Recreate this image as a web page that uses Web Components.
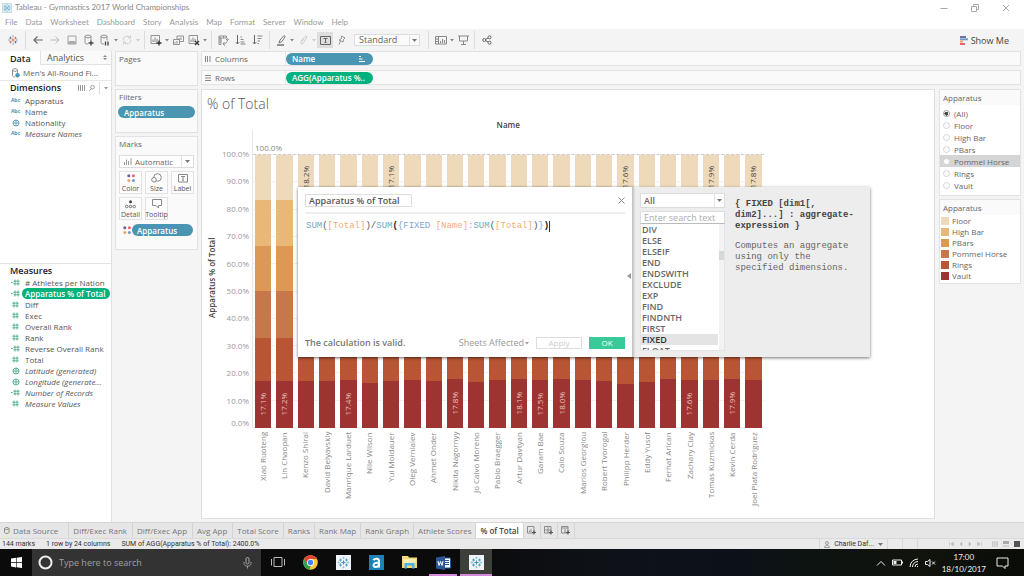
<!DOCTYPE html>
<html lang="en">
<head>
<meta charset="utf-8">
<title>Tableau - Gymnastics 2017 World Championships</title>
<style>
html,body{margin:0;height:100%;background:#f4f4f4}
body{font:8px/11px "Open Sans","Noto Sans",sans-serif;color:#666}
</style>
</head>
<body>
<app-window></app-window>
<script>
const BASE = `*{box-sizing:border-box}
button,input,select{font:inherit;color:inherit;margin:0;padding:0;border:0;background:none;border-radius:0;outline:0;text-align:inherit}
select{appearance:none}
ul{list-style:none;margin:0;padding:0}
svg{display:block;flex:none}
:host{display:block}`;
const define = (name, css, html) => customElements.define(name, class extends HTMLElement {
  constructor() {
    super();
    const root = this.attachShadow({ mode: 'open' });
    const t = document.createElement('template');
    t.innerHTML = `<style>${BASE}${css}</style>${typeof html === 'function' ? html(this) : html}`;
    root.append(t.content.cloneNode(true));
  }
});
const svg = (w, h, body, extra = '') => `<svg width="${w}" height="${h}" viewBox="0 0 ${w} ${h}" fill="none" stroke="currentColor" aria-hidden="true" ${extra}>${body}</svg>`;
const CARET = svg(5, 3, '<path d="M0 0h5L2.5 3z" fill="#777" stroke="none"/>');
const SPARK = (s, c) => `<svg width="${s}" height="${s}" viewBox="0 0 12 12" fill="none" aria-hidden="true">${c}</svg>`;
const CROSSES = col => `<g stroke="${col[0]}" stroke-width="1.1"><path d="M6 4v4M4 6h4"/></g><g stroke="${col[1]}"><path d="M3 2v3M1.5 3.5h3M9 7v3M7.5 8.5h3"/></g><g stroke="${col[2]}"><path d="M9 2v3M7.500 3.500h3M3 7v3M1.500 8.500h3"/></g><g stroke="${col[3]}" stroke-width=".8"><path d="M6 .2v2.200M4.900 1.300h2.200M6 9.600v2.200M4.900 10.700h2.200M1.300 4.900v2.200M.2 6h2.200M10.700 4.900v2.200M9.600 6h2.200"/></g>`;
const BLUE = ['#3f94b8', '#5aa5c6', '#5aa5c6', '#7fbcd6'];
const DOTS = svg(10, 10, '<g stroke="none"><circle cx="2.800" cy="2.800" r="1.500" fill="#6f5b8c"/><circle cx="7.400" cy="2.800" r="1.500" fill="#f0616e"/><circle cx="2.800" cy="7.400" r="1.500" fill="#f2a272"/><circle cx="7.400" cy="7.400" r="1.500" fill="#6f9cc6"/></g>');

define('title-bar', `
:host{display:flex;align-items:center;height:15px;background:#fff;color:#888;padding:0 14px 0 2px;gap:3px;font:8px/11px Lato,sans-serif}
.i{background:#e3eff5;border:1px solid #c8dbe5}
nav{margin-left:auto;display:flex;gap:23px;color:#aaa}`,
`<span class="i">${SPARK(8, CROSSES(BLUE))}</span><span>Tableau - Gymnastics 2017 World Championships</span>
<nav><button aria-label="Minimise">${svg(8, 8, '<path d="M.5 4.500h7"/>')}</button><button aria-label="Restore">${svg(8, 8, '<path d="M.5 2.500h5v5h-5zM2.500 2V.5h5v5H6"/>')}</button><button aria-label="Close">${svg(8, 8, '<path d="M1 1l6 6M7 1L1 7"/>')}</button></nav>`);

define('menu-bar', `
:host{display:flex;align-items:center;height:14px;background:#fff;color:#999;padding-left:5px;gap:8px;font:8px/11px Lato,sans-serif}`,
'File,Data,Worksheet,Dashboard,Story,Analysis,Map,Format,Server,Window,Help'.split(',').map(m => `<button>${m}</button>`).join(''));

const ic = {
  back: svg(10, 10, '<path d="M.8 5h9M4.500 1.500L1 5l3.500 3.500" stroke="#666" stroke-width="1.200"/>'),
  fwd: svg(10, 10, '<path d="M.5 5h8.500M5.500 1.500L9 5 5.500 8.500" stroke="#bbb"/>'),
  save: svg(10, 10, '<path d="M1 1h8v8H1zM3 9V6.500h4V9" stroke="#999" stroke-width=".9"/><path d="M1 6.500h8v2.500H1z" fill="#aaa" stroke="none"/>'),
  db: svg(10, 12, '<path d="M1 2.500v6c0 1 1 1.500 3 1.500M1 2.500C1 .8 7 .8 7 2.500S1 4.200 1 2.500M7 2.500v4" stroke="#888" stroke-width=".9"/><path d="M7 6.500v5M4.500 9h5" stroke="#444" stroke-width="1.300"/>'),
  pause: svg(10, 12, '<path d="M1 2.500v6c0 1 1 1.500 3 1.500M1 2.500C1 .8 7 .8 7 2.500S1 4.200 1 2.500M7 2.500v4" stroke="#888" stroke-width=".9"/><path d="M5.500 7.500v4M8 7.500v4" stroke="#444" stroke-width="1.300"/>'),
  refresh: svg(10, 10, '<path d="M1 5.500a4 4 0 0 1 7-3M9 4.500a4 4 0 0 1-7 3M8.500.5v2.500H6M1.500 9.500V7H4" stroke="#ccc"/>'),
  sheet: svg(12, 12, '<path d="M1 1.500h8.500v8H1z" stroke="#888" stroke-width=".9"/><path d="M3 8V5.500M5 8V3.500M7 8V5" stroke="#888"/><path d="M9 6.500v5M6.500 9h5" stroke="#333" stroke-width="1.300"/>'),
  dup: svg(11, 11, '<path d="M.5 4.500h6v5h-6zM4 4V1h6.500v5.500H7" stroke="#888" stroke-width=".9"/><path d="M2 8.500V7M4 8.500V6M6 4.500V3M8 5V2.500" stroke="#888"/>'),
  clear: svg(12, 12, '<path d="M1 1.500h8.500v8H1z" stroke="#888" stroke-width=".9"/><path d="M3 8V5.500M5 8V3.500M7 8V5" stroke="#888"/><path d="M7 7l4 4M11 7l-4 4" stroke="#333" stroke-width="1.200"/>'),
  swap: svg(11, 11, '<path d="M1 1h7.500v2H1zM1 3h2v6.500H1zM5.500 1v2M1 5h2M1 7h2M9.500 4.500c0 3-2 4.500-4.500 4.500M6.500 7L5 9l2 1.500M8 5l1.500-1.500L10.700 5" stroke="#888" stroke-width=".9"/>'),
  asc: svg(11, 10, '<path d="M2.500 0v9M.8 7.200L2.500 9l1.700-1.800" stroke="#666"/><path d="M5.500 2h1.500M5.500 4.500h3M5.500 7h4M5.500 9h5" stroke="#888"/>'),
  desc: svg(11, 10, '<path d="M2.500 0v9M.8 7.200L2.500 9l1.700-1.800" stroke="#666"/><path d="M5.500 1h5M5.500 3.500h4M5.500 6h2.500M5.500 8.500h1.500" stroke="#888"/>'),
  pen: svg(10, 11, '<path d="M3 8l1-3 4-4.500 1.200 1L6 6.500z" stroke="#777"/><path d="M1 10h7" stroke="#555" stroke-width="1.200"/>'),
  clip: svg(9, 11, '<path d="M2 6l4-4.500c1-1 2.500 0 1.500 1.500L4 8.500c-1 1.200-2.800 0-1.800-1.500L5 3.500" stroke="#ccc"/>'),
  text: svg(11, 9, '<path d="M.5.5h10v8H.5z" stroke="#666"/><path d="M3.500 2.500h4M5.500 2.500v4M4.500 6.500h2" stroke="#666"/>'),
  pin: svg(9, 10, '<path d="M4.500 1L8 3 6.500 4.500 6 7 2 5l2.500-1.500zM3.500 6L2 9.500" stroke="#888" stroke-width=".9"/>'),
  cards: svg(12, 9, '<path d="M.5.5h11v7.500H.5zM3.500.5V8M1 3h2M1 5.500h2M5.500 7V5M7.500 7V3M9.500 7V4" stroke="#888"/>'),
  show: svg(11, 10, '<path d="M0 1h11M1.500 1v5h8V1M5.500 6v3M3 9.500h5" stroke="#888"/>'),
  share: svg(10, 10, '<circle cx="2.300" cy="5" r="1.500"/><circle cx="7.500" cy="2.300" r="1.500"/><circle cx="7.500" cy="7.700" r="1.500"/><path d="M3.700 4.300L6.200 3M3.700 5.700L6.200 7"/>')
};
const tb = (k, label, cls = '') => `<button class="t ${cls}" aria-label="${label}">${ic[k]}</button>`;
const dd = (cls = '') => `<button class="c ${cls}" aria-label="More options">${svg(4, 3, '<path d="M0 0h4L2 2.500z" fill="currentColor" stroke="none"/>')}</button>`;
define('tool-bar', `
:host{display:flex;align-items:center;height:22px;color:#666;font-size:9px}
button{display:flex;align-items:center;justify-content:center}
.t{width:16px;height:16px}.w{width:17px}
.l{width:22px;justify-content:flex-end;padding-right:4px}.on{background:#dedede}
.c{width:6px;height:16px;color:#888}.off{color:#ccc}
i{width:1px;height:18px;background:#dcdcdc;margin:0 3px}
.sel{display:grid;align-items:center;width:66px;height:12px;margin:0 5px;background:#fbfbfb;border:1px solid #ddd}
.sel>*{grid-area:1/1}.sel select{padding-left:4px;line-height:10px;height:10px}
.sel span{justify-self:end;border-left:1px solid #ddd;padding:3px 2px;pointer-events:none}
.show{margin-left:auto;margin-right:15px;gap:3px;color:#444}`,
`<button class="t l" aria-label="Start page">${SPARK(10, CROSSES(['#e8762d', '#5a6f9c', '#d9606a', '#8aa6c4']))}</button><i></i>
${tb('back', 'Undo', 'w')}${tb('fwd', 'Redo', 'w')}${tb('save', 'Save', 'w')}${tb('db', 'New data source', 'w')}${tb('pause', 'Pause updates')}${dd()}${tb('refresh', 'Refresh')}${dd('off')}<i></i>
${tb('sheet', 'New worksheet')}${dd()}${tb('dup', 'Duplicate')}${tb('clear', 'Clear sheet')}${dd()}<i></i>
${tb('swap', 'Swap rows and columns', 'w')}${tb('asc', 'Sort ascending', 'w')}${tb('desc', 'Sort descending', 'w')}<i></i>
${tb('pen', 'Highlight')}${dd()}${tb('clip', 'Group')}${dd('off')}${tb('text', 'Show mark labels', 'on')}${tb('pin', 'Fix axes')}
<div class="sel"><select aria-label="Fit"><option>Standard</option></select><span>${CARET}</span></div><i></i>
${tb('cards', 'Show cards', 'w')}${dd()}${tb('show', 'Presentation mode')}<i></i>${tb('share', 'Share', 'w')}
<button class="show">${svg(8, 9, '<g stroke="none"><path d="M0 0h6v2H0z" fill="#7b6c9e"/><path d="M0 2.300h8v2H0z" fill="#6f9cc6"/><path d="M0 4.600h3v2H0z" fill="#f2a272"/><path d="M0 7h5v2H0z" fill="#f0616e"/></g>')}Show Me</button>`);

define('field-pill', `
:host{display:flex;align-items:center;height:12px;border-radius:6px;background:var(--pill,#4a96b2);color:#fff;font-weight:600;padding:0 8px 0 6px;white-space:nowrap;overflow:hidden}
span{margin-right:auto}`,
`<span><slot></slot></span><slot name="icon"></slot>`);

const FI = {
  abc: '<b>Abc</b>',
  geo: svg(8, 8, '<circle cx="4" cy="4" r="3"/><path d="M1 4h6M4 1v6" stroke-width=".8"/>', 'stroke-width=".8"'),
  num: svg(7, 7, '<path d="M2 .5v6M5 .5v6M.3 2.200h6.400M.3 4.800h6.400" stroke-width=".8"/>'),
  calc: svg(9, 7, '<path d="M4 .5v6M7 .5v6M2.300 2.200h6.400M2.300 4.800h6.400" stroke-width=".8"/><path d="M0 3.500h1.500"/>')
};
const f = (k, t, c = '') => `<li class="${c}"><span class="k ${k}">${FI[k]}</span><span class="n">${t}</span></li>`;
define('data-pane', `
:host{display:flex;flex-direction:column;width:112px;background:#fff;border-right:1px solid #e0e0e0;color:#555}
.tabs{display:flex;height:14px;font-size:9px}
.tabs button{padding-left:10px;width:40px;color:#222;font-weight:600}
.tabs .an{flex:1;display:flex;justify-content:space-between;align-items:center;padding:0 4px 0 6px;background:#fafafa;border:solid #e2e2e2;border-width:0 0 1px 1px;color:#555;font-weight:400}
.an svg{color:#888}
.src{display:flex;align-items:center;gap:3px;height:16px;padding-left:12px;border-bottom:1px solid #e8e8e8;color:#666}
h2{margin:0;font-size:9px;line-height:14px;font-weight:600;color:#222;padding:0 3px 0 10px;display:flex;align-items:center;gap:4px}
h2 span{margin-right:auto}h2 svg{color:#999}h2 i{width:1px;height:12px;background:#ddd}
.dim{flex:0 0 182px}
.mea{border-top:1px solid #e4e4e4;flex:1}
.mea h2{line-height:13px}
li{display:flex;align-items:center;height:11px;padding-left:10px;white-space:nowrap}
.k{width:11px;display:flex;justify-content:center;color:#4a96b2;margin-right:1px}
.k b{font-size:5px;font-weight:700}
.mea .k{color:#3aa583}
.n{padding:0 3px}
.gen .n{font-style:italic}
.sel .n{background:#00b180;color:#fff;font-weight:600;border-radius:6px;padding:0 5px 0 3px}`,
`<div class="tabs"><button>Data</button><button class="an">Analytics${svg(4, 5, '<path d="M0 2l2-2 2 2zM0 3l2 2 2-2z" fill="currentColor" stroke="none"/>')}</button></div>
<div class="src">${svg(8, 10, '<path d="M.5 2v5.500C.5 8.500 2 9 3 9M.5 2c0-1.800 5-1.800 5 0s-5 1.800-5 0M5.500 2v3" stroke="#888" stroke-width=".9"/><circle cx="5.500" cy="7.300" r="2.200" fill="#4a96b2" stroke="none"/>')}Men's All-Round Fi...</div>
<div class="dim"><h2><span>Dimensions</span>${svg(7, 6, '<path d="M.5 0v6M2.500 0v6M4.500 0v6M6.500 0v6"/>')}${svg(6, 6, '<circle cx="3.500" cy="2.300" r="1.800"/><path d="M2.300 3.800L.3 5.800"/>')}<i></i>${svg(4, 3, '<path d="M0 0h4L2 2.500z" fill="currentColor" stroke="none"/>')}</h2>
<ul>${f('abc', 'Apparatus')}${f('abc', 'Name')}${f('geo', 'Nationality')}${f('abc', 'Measure Names', 'gen')}</ul></div>
<div class="mea"><h2><span>Measures</span></h2>
<ul>${f('calc', '# Athletes per Nation')}${f('calc', 'Apparatus % of Total', 'sel')}${f('num', 'Diff')}${f('num', 'Exec')}${f('num', 'Overall Rank')}${f('num', 'Rank')}${f('calc', 'Reverse Overall Rank')}${f('num', 'Total')}${f('geo', 'Latitude (generated)', 'gen')}${f('geo', 'Longitude (generate...', 'gen')}${f('calc', 'Number of Records', 'gen')}${f('num', 'Measure Values', 'gen')}</ul></div>`);

define('shelf-card', `
:host{background:#fafafa;border:1px solid #e2e2e2;padding:0 2px}
h3{margin:0;font:inherit;line-height:14px;padding-left:1px}`,
el => `<h3>${el.getAttribute('label')}</h3><slot></slot>`);

define('marks-controls', `
:host{display:grid;grid-template-columns:repeat(3,23px);gap:3px;padding:4px 1px 0}
.sel{grid-column:1/-1;display:grid;grid-template-columns:auto 1fr;align-items:center;height:13px;border:1px solid #ddd;background:#fff;padding-left:4px;color:#666}
.sel svg:first-child{color:#999}
.sel>select{grid-area:1/2;padding-left:3px;height:11px;line-height:11px}
.sel span{grid-area:1/2;justify-self:end;border-left:1px solid #e2e2e2;padding:4px 3px;pointer-events:none}
button{display:flex;flex-direction:column;align-items:center;justify-content:flex-end;height:23px;border:1px solid #e2e2e2;background:#fcfcfc;font-size:7px;line-height:9px;gap:1px;color:#555;white-space:nowrap}`,
`<div class="sel">${svg(8, 7, '<path d="M.5 7V4M2.500 7V1.500M4.500 7V3M7 7V0"/>')}<select aria-label="Mark type"><option>Automatic</option></select><span>${CARET}</span></div>
<button>${DOTS}Color</button><button>${svg(11, 10, '<circle cx="6.500" cy="4.500" r="3.800" stroke="#888"/><circle cx="3" cy="6.800" r="2.300" fill="#fcfcfc" stroke="#888"/>')}Size</button><button>${svg(10, 9, '<path d="M.5.5h9v7.500h-9zM3 2.500h4M5 2.500v4M4.300 6.300h1.500" stroke="#888"/>')}Label</button>
<button>${svg(11, 9, '<circle cx="5.500" cy="1.800" r="1.500" fill="#444" stroke="none"/><circle cx="1.800" cy="6.500" r="1.300" stroke="#777"/><circle cx="5.500" cy="6.500" r="1.300" stroke="#777"/><circle cx="9.200" cy="6.500" r="1.300" stroke="#777"/>')}Detail</button><button>${svg(10, 10, '<path d="M.5.5h9v6H6.500V9L4 6.500H.5z" stroke="#888"/>')}Tooltip</button>`);

define('shelf-row', `
:host{display:flex;align-items:center;height:15px;background:#fafafa;border:1px solid #e2e2e2}
.l{display:flex;align-items:center;gap:4px;width:84px;padding-left:3px;height:100%;border-right:1px solid #e8e8e8}
.l svg{color:#888}`,
el => `<div class="l">${el.getAttribute('kind') === 'cols' ? svg(6, 6, '<path d="M.5 0v6M2.500 0v6M5 0v6"/>') : svg(6, 6, '<path d="M0 .5h6M0 3h6M0 5.500h6"/>')}<span>${el.getAttribute('label')}</span></div><slot></slot>`);

const PEOPLE = [
  ['Xiao Ruoteng', 17.1, '', 1], ['Lin Chaopan', 17.2, '', 1], ['Kenzo Shirai', 17.1, '18.2%'], ['David Belyavskiy', 17.1, ''],
  ['Manrique Larduet', 17.4, '', 1], ['Nile Wilson', 16.5, ''], ['Yul Moldauer', 17.1, '17.1%'], ['Oleg Verniaiev', 17.7, ''],
  ['Ahmet Onder', 17.2, ''], ['Nikita Nagornyy', 17.8, '', 1], ['Jo Calvo Moreno', 16.8, ''], ['Pablo Braegger', 17.5, ''],
  ['Artur Davtyan', 18.1, '', 1], ['Garam Bae', 17.5, '', 1], ['Caio Souza', 18.0, '', 1], ['Marios Georgiou', 17.5, ''],
  ['Robert Tvorogal', 17.2, ''], ['Philipp Herder', 16.1, '17.6%'], ['Eddy Yusof', 16.8, ''], ['Ferhat Arican', 17.9, ''],
  ['Zachary Clay', 17.6, '', 1], ['Tomas Kuzmickas', 17.4, '17.9%'], ['Kevin Cerda', 17.9, '', 1], ['Joel Plata Rodriguez', 17.6, '17.8%']];
const ticks = [100, 90, 80, 70, 60, 50, 40, 30, 20, 10];
define('bar-chart', `
:host{display:grid;grid-template:30px 10px minmax(200px,1fr) 90px / 50px 70%;background:#fff;border:1px solid #e0e0e0;color:#999}
h1{grid-column:1/-1;margin:0;padding-left:5px;font-size:14px;line-height:28px;font-weight:300;color:#555}
.hd{grid-column:2;text-align:center;line-height:9px;color:#444;font-weight:600}
.ax{display:flex;padding-top:24px}
.ay{writing-mode:vertical-rl;transform:rotate(180deg);text-align:center;width:20px;line-height:20px;color:#444;font-weight:600;padding-top:26px}
.ticks{flex:1;display:flex;flex-direction:column;text-align:right;padding-right:3px}
.ticks div{flex:1;display:flex;flex-direction:column;justify-content:space-between;line-height:10px}
.ticks span:first-child{margin-top:-5px}
.plot{display:flex;flex-direction:column;border-left:1px solid #e6e6e6}
.ref{height:24px;line-height:12px;padding:12px 0 0 2px;color:#888}
.bars{flex:1;display:flex;border-top:1px dashed #ccc;background:repeating-linear-gradient(transparent 0 calc(10% - 1px),#f1f1f1 calc(10% - 1px) 10%)}
.col{flex:1;display:flex;flex-direction:column;padding:0 3px 0 2px}
.col div{display:flex;align-items:center;justify-content:center}
.v{writing-mode:vertical-rl;transform:rotate(180deg);white-space:nowrap;line-height:12px}
.names{grid-column:2;display:flex;padding-top:4px}
.names li{flex:1;display:flex;justify-content:center}
.names .v{text-align:right;height:86px;color:#888}`,
`<h1>% of Total</h1><div class="hd">Name</div>
<div class="ax"><div class="ay">Apparatus % of Total</div><div class="ticks">${ticks.map(t => `<div><span>${t}.0%</span>${t === 10 ? '<span>0.0%</span>' : ''}</div>`).join('')}</div></div>
<div class="plot"><div class="ref">100.0%</div><div class="bars">${PEOPLE.map(([n, v, top, show]) => {
  const parts = [[16.5, '#eedabb', top, '#444'], [16.8, '#e9b878'], [16.7, '#dc9855'], [17, '#c7774c'], [33 - v, '#b85535'], [v, '#9e3432', show ? v.toFixed(1) + '%' : '', '#e8c4be']];
  return `<div class="col">${parts.map(([h, c, l, tc]) => `<div style="height:${h}%;background:${c}">${l ? `<span class="v" style="color:${tc}">${l}</span>` : ''}</div>`).join('')}</div>`;
}).join('')}</div></div>
<ul class="names">${PEOPLE.map(p => `<li><span class="v">${p[0]}</span></li>`).join('')}</ul>`);

define('filter-card', `
:host{background:#fff;border:1px solid #e2e2e2}
h3{margin:0;font:inherit;line-height:15px;padding:0 3px;background:#fafafa}
div{padding:2px 0 4px}
label{display:flex;align-items:center;height:12px;gap:4px;padding-left:3px}
label:nth-child(5){background:#d5d5d5}
input{appearance:none;width:7px;height:7px;border-radius:50%;border:1px solid #d5d5d5;background:#fff}
input:checked{border-color:#999;background:radial-gradient(#444 0 1px,#666 2px,#fff 2px)}`,
`<h3>Apparatus</h3><div>${['(All)', 'Floor', 'High Bar', 'PBars', 'Pommel Horse', 'Rings', 'Vault'].map((t, i) => `<label><input type="radio" name="apparatus"${i ? '' : ' checked'}>${t}</label>`).join('')}</div>`);

define('legend-card', `
:host{background:#fff;border:1px solid #e2e2e2}
h3{margin:0;font:inherit;line-height:15px;padding:0 3px;background:#fafafa}
ul{padding-bottom:2px}
li{display:flex;align-items:center;gap:3px;height:11px;padding-left:1px}
i{width:8px;height:8px}`,
`<h3>Apparatus</h3><ul>${[['Floor', '#eedabb'], ['High Bar', '#e9b878'], ['PBars', '#dc9855'], ['Pommel Horse', '#c7774c'], ['Rings', '#b85535'], ['Vault', '#9e3432']].map(([t, c]) => `<li><i style="background:${c}"></i>${t}</li>`).join('')}</ul>`);

define('calc-dialog', `
:host{display:flex;width:572px;height:170px;box-shadow:0 1px 3px #0008;font-size:9px;background:#ededed;color:#666}
.ed{width:335px;background:#fff;display:flex;flex-direction:column;padding:7px 7px 8px;border-right:1px solid #c4c4c4;box-shadow:1px 0 2px #0003}
.top{display:flex;justify-content:space-between;align-items:flex-start;height:20px;border-bottom:2px solid #eee}
.top input{width:107px;height:13px;border:1px solid #ddd;border-radius:1px;padding-left:3px;font-weight:600;color:#555}
.x{height:13px;display:flex;align-items:center;color:#888}
.mid{flex:1;display:flex;align-items:center;margin-right:-6px}
.code{align-self:stretch;flex:1;padding:6px 1px;font:9px/12px "Liberation Mono",monospace;color:#555;white-space:pre;outline:0}
.code b{color:#222}.f{color:#6fabc4}.a{color:#f3ad79}.k{color:#7fa3d4}
.code u{border-left:1px solid #333;display:inline-block;height:11px;vertical-align:bottom}
.ft{display:flex;align-items:center;height:12px;gap:7px;color:#777}
.ft span{font-weight:600;line-height:10px;margin-right:auto}
.ft button{height:12px;text-align:center;line-height:10px}
.aff{display:flex;align-items:center;gap:1px;color:#999}
.ap{width:46px;border:1px solid #ddd;color:#ccc;font-size:8px}
.ok{width:36px;background:#38cb99;color:#fff;font-size:8px}
.fn{width:85px;margin:6px 0 6px 7px;display:flex;flex-direction:column}
.sel{display:grid;align-items:center;height:15px;background:#fff;border:1px solid #ddd}
.sel>*{grid-area:1/1}.sel select{padding-left:3px;font-weight:600;height:13px}
.sel span{justify-self:end;border-left:1px solid #e2e2e2;padding:5px 2px;pointer-events:none}
.fn input{height:13px;margin-top:3px;background:#fff;border:1px solid #ddd;border-bottom-color:#bbb;padding-left:3px;width:100%}
.fn input::placeholder{color:#aaa;opacity:1}
.ls{flex:1;min-height:0;overflow:hidden;background:#fff;display:flex;border:1px solid #e4e4e4;border-top:0}
.ls ul{flex:1;font-weight:600}
.ls li{height:11px;line-height:11px;padding-left:1px;margin-right:1px}
.ls li.on{background:#e4e4e4;color:#333}
.sb{width:5px;background:#f3f3f3;padding-top:27px}.sb i{display:block;height:9px;background:#d8d8d8}
.doc{flex:1;padding:12px 12px 0 10px;font:9px/11px "Liberation Mono",monospace}
.doc p{margin:0 0 9px}.doc b{color:#444}`,
`<div class="ed"><div class="top"><input aria-label="Calculation name" value="Apparatus % of Total"><button class="x" aria-label="Close">${svg(7, 7, '<path d="M.5.5l6 6M6.500.5l-6 6"/>')}</button></div>
<div class="mid"><div class="code" role="textbox" aria-label="Formula" contenteditable="true" spellcheck="false"><span class="f">SUM</span>(<span class="a">[Total]</span>)/<span class="f">SUM</span><b>(</b><span class="k">{FIXED </span><span class="a">[Name]</span><span class="k">:</span><span class="f">SUM</span>(<span class="a">[Total]</span>)<span class="k">}</span><b>)</b><u></u></div>${svg(4, 6, '<path d="M4 0v6L0 3z" fill="#999" stroke="none"/>')}</div>
<div class="ft"><span>The calculation is valid.</span><button class="aff">Sheets Affected${svg(4, 3, '<path d="M0 0h4L2 2.500z" fill="currentColor" stroke="none"/>')}</button><button class="ap">Apply</button><button class="ok">OK</button></div></div>
<div class="fn"><div class="sel"><select aria-label="Function category"><option>All</option></select><span>${CARET}</span></div><input aria-label="Search functions" placeholder="Enter search text">
<div class="ls"><ul role="listbox" aria-label="Functions">${'DIV,ELSE,ELSEIF,END,ENDSWITH,EXCLUDE,EXP,FIND,FINDNTH,FIRST,FIXED,FLOAT'.split(',').map(t => `<li role="option" class="${t === 'FIXED' ? 'on' : ''}">${t}</li>`).join('')}</ul><div class="sb"><i></i></div></div></div>
<div class="doc"><p><b>{ FIXED [dim1[, dim2]...] : aggregate-expression }</b></p><p>Computes an aggregate using only the specified dimensions.</p></div>`);

define('sheet-tabs', `
:host{display:flex;height:16px;background:#e6e6e6;border-top:1px solid #d6d6d6;color:#777}
button{display:flex;align-items:center;gap:3px;padding:0 5px 0 4px;border-right:1px solid #d4d4d4;white-space:nowrap}
button:nth-child(n+6){padding-right:4px}
button.src{padding-right:10px}
button.on{background:#fff;color:#444;font-weight:600}
button.new{width:17px;padding:0;justify-content:center}`,
`<button class="src">${svg(6, 7, '<path d="M.5 1.500v4c0 1.300 4.500 1.300 4.500 0v-4M.5 1.500c0-1.300 4.500-1.300 4.500 0s-4.500 1.300-4.500 0" stroke-width=".8"/>')}Data Source</button>${'Diff/Exec Rank,Diff/Exec App,Avg App,Total Score,Ranks,Rank Map,Rank Graph,Athlete Scores'.split(',').map(t => `<button>${t}</button>`).join('')}<button class="on">% of Total</button>${[['New worksheet', 'M2.500 4.500V6M4 3v3'], ['New dashboard', 'M1 4h6M4 1v6'], ['New story', 'M4 1v6M1 2h2M5 2h2']].map(([l, p]) => `<button class="new" aria-label="${l}">${svg(9, 9, `<path d="M.5.5h6.500v6.500H.5z${p}" stroke-width=".8"/><path d="M7 4.500v4M5 6.500h4" stroke="#555" stroke-width="1.200"/>`)}</button>`).join('')}`);

define('status-bar', `
:host{display:flex;align-items:center;height:11px;background:#eaeaea;border-top:1px solid #dadada;padding-left:2px;gap:11px;color:#333;font:7px/10px Roboto,sans-serif}
.r{margin-left:auto;display:flex;align-items:center;align-self:stretch}
.r>*{display:flex;align-items:center;height:100%;border-left:1px solid #d8d8d8}
.u{gap:4px;padding:0 4px}.u svg:first-child{color:#888}
.e{width:15px}.nav{gap:5px;padding:0 6px 0 31px;color:#bbb}.vw{gap:5px;padding:0 4px;border:0;color:#aaa}`,
`<span>144 marks</span><span>1 row by 24 columns</span><span>SUM of AGG(Apparatus % of Total): 2400.0%</span>
<div class="r"><button class="u">${svg(6, 7, '<circle cx="3" cy="2" r="1.500" stroke-width=".8"/><path d="M.5 6.500c0-3 5-3 5 0z" stroke-width=".8"/>')}<span>Charlie Daf...</span>${CARET}</button><span class="e"></span><span class="e"></span>
<span class="nav">${svg(5, 4, '<path d="M.5 0v4M4.500 0L2 2l2.500 2z" fill="currentColor" stroke-width=".6"/>')}${svg(4, 4, '<path d="M3 0L1 2l2 2z" fill="currentColor" stroke-width=".6"/>')}${svg(4, 4, '<path d="M1 0l2 2-2 2z" fill="currentColor" stroke-width=".6"/>')}${svg(5, 4, '<path d="M4.500 0v4M.5 0L3 2 .5 4z" fill="currentColor" stroke-width=".6"/>')}</span>
<span class="vw">${svg(6, 6, '<path d="M0 1h6M0 3h6M0 5h6" stroke-dasharray="1.500 .7"/>')}${svg(6, 6, '<path d="M0 0h6v3H0z" fill="currentColor" stroke="none"/><path d="M0 5h6" stroke-dasharray="1.500 .7"/>')}${svg(6, 6, '<path d="M0 0h6v6H0z" fill="#555" stroke="none"/>')}</span></div>`);

define('task-bar', `
:host{display:flex;align-items:stretch;height:27px;color:#eee;background:linear-gradient(90deg,#0b0b0c 0 45%,#0e1218 60%,#0c1119 72%,#0d1310 80%,#11130d 90%,#0a0c08);font:8px/12px "Open Sans",sans-serif}
button{display:flex;align-items:center;justify-content:center;width:33px}
.st{width:32px}
.se{display:flex;align-items:center;width:229px;background:#333;padding:0 9px 0 6px;gap:6px}
.se input{flex:1;min-width:0;font:9px/12px "Open Sans",sans-serif}
.se input::placeholder{color:#a0a0a0;opacity:1}
.run{border-bottom:2px solid #d688dd;padding-top:2px;width:28px;margin:0 3px}
.on{width:32px;background:#3d3f3b;margin:0}
.r{margin-left:auto;display:flex;align-items:center;gap:6px;padding-right:15px}
time{text-align:center;line-height:12px;font-family:Lato,sans-serif;margin-right:4px}`,
`<button class="st" aria-label="Start">${svg(11, 11, '<path d="M0 1.600l5-.8v4.500H0zM5.600.7L11 0v5.300H5.600zM0 5.900h5v4.500l-5-.8zM5.600 5.900H11V11l-5.400-.7z" fill="#fff" stroke="none"/>')}</button>
<div class="se">${svg(15, 15, '<circle cx="7.500" cy="7.500" r="6" stroke="#eee" stroke-width="2"/>')}<input aria-label="Search" placeholder="Type here to search">${svg(9, 12, '<rect x="3" y=".5" width="3" height="6.500" rx="1.500"/><path d="M1 5v1.500c0 3.500 7 3.500 7 0V5M4.500 9v2.500" stroke="#999"/>', 'color="#aaa"')}</div>
<button aria-label="Task view">${svg(14, 11, '<path d="M3 .5h8v9H3zM.5 2v6.500M13.500 2v6.500" stroke="#bbb"/>')}</button>
<button aria-label="Chrome"><svg width="15" height="15" viewBox="0 0 15 15" aria-hidden="true"><circle cx="7.500" cy="7.500" r="7.300" fill="#fcc934"/><path d="M7.500.2a7.300 7.300 0 0 1 6.400 3.700H7.500L4.300 9.200 1.200 3.900A7.300 7.300 0 0 1 7.500.2z" fill="#e04537"/><path d="M1.200 3.900l3.200 5.400 3.200 1.800-1.200 3.600A7.300 7.300 0 0 1 1.200 3.900z" fill="#30a351"/><circle cx="7.500" cy="7.500" r="3.500" fill="#fff"/><circle cx="7.500" cy="7.500" r="2.700" fill="#4285f4"/></svg></button>
<button aria-label="Tableau"><svg width="15" height="15" viewBox="0 0 15 15" fill="none" aria-hidden="true"><path d="M0 0h15v15H0z" fill="#eef4f8"/><g transform="translate(1.500 1.500)">${CROSSES(BLUE)}</g></svg></button>
<button aria-label="Alteryx"><svg width="15" height="15" viewBox="0 0 15 15" fill="none" aria-hidden="true"><path d="M0 0h15v15H0z" fill="#1c83b8"/><path d="M4.500 5.200C5.500 3.200 10 3 10 6v6.500M10 7.500C3 7.500 3.800 12 6.500 12c2 0 3.500-1.300 3.500-3" stroke="#fff" stroke-width="2"/></svg></button>
<button aria-label="File Explorer"><svg width="15" height="13" viewBox="0 0 15 13" aria-hidden="true"><path d="M0 0h6l1 1.500h8V12H0z" fill="#f7d774"/><path d="M1.500 3h12v4h-12z" fill="#fdeeb0"/><path d="M2.500 7h10v5.500H10V9.500H5v3H2.500z" fill="#4bb3e6"/></svg></button>
<button class="run" aria-label="Word"><svg width="15" height="14" viewBox="0 0 15 14" fill="none" aria-hidden="true"><path d="M8 2h6.500v10H8z" fill="#fff" stroke="#2b579a"/><path d="M9 4.500h4M9 6.500h4M9 8.500h4" stroke="#2b579a"/><path d="M0 1.500L9 0v14L0 12.500z" fill="#2b579a"/><path d="M2 5l1 4.500L4.500 5.500 6 9.500 7 5" stroke="#fff"/></svg></button>
<button class="run on" aria-label="Tableau, active"><svg width="15" height="15" viewBox="0 0 15 15" fill="none" aria-hidden="true"><path d="M0 0h15v15H0z" fill="#eef4f8"/><g transform="translate(1.500 1.500)">${CROSSES(BLUE)}</g></svg></button>
<div class="r">${svg(10, 6, '<path d="M1 5.500L5 1.500l4 4"/>')}${svg(11, 7, '<path d="M.5 1h9v5h-9zM10.500 2.500v2"/><path d="M1.500 2h3v3h-3z" fill="currentColor" stroke="none"/>')}${svg(10, 10, '<path d="M1 9a8 8 0 0 1 8-8M3.500 9A5.500 5.500 0 0 1 9 3.500M6 9a3 3 0 0 1 3-3M8 9l1-1"/>')}${svg(11, 8, '<path d="M.5 2.500h2L5 .5v7L2.500 5.500h-2zM7 2.500l3 3M10 2.500l-3 3"/>')}<time>17:00<br>18/10/2017</time>${svg(13, 12, '<path d="M1 1h11v8H9v2.500L6.500 9H1z"/>')}</div>`);

define('app-window', `
:host{display:flex;flex-direction:column;min-height:100vh;position:relative;background:#f4f4f4}
.body{flex:1;display:flex;gap:3px;padding-right:3px}
.cards{width:83px;display:flex;flex-direction:column;gap:3px;padding-bottom:3px}
.pg{height:35px}.fl{height:44px}.mk{height:114px}
.fl field-pill{margin-top:2px}
.mark{display:flex;align-items:center;padding:4px 2px 0 4px}
.mark field-pill{flex:1;padding-left:5px}
.main{flex:1;min-width:0;display:flex;flex-direction:column;gap:4px;padding-bottom:3px}
.shelf{width:87px}
.green{--pill:#00b180}
.view{flex:1;display:flex;gap:4px}
bar-chart{flex:1;min-width:0}
.side{width:82px;display:flex;flex-direction:column;gap:3px}
calc-dialog{position:absolute;left:298px;top:187px}`,
`<title-bar></title-bar><menu-bar></menu-bar><tool-bar></tool-bar>
<div class="body"><data-pane></data-pane>
<div class="cards"><shelf-card class="pg" label="Pages"></shelf-card>
<shelf-card class="fl" label="Filters"><field-pill>Apparatus</field-pill></shelf-card>
<shelf-card class="mk" label="Marks"><marks-controls></marks-controls><div class="mark">${DOTS}<field-pill>Apparatus</field-pill></div></shelf-card></div>
<div class="main"><shelf-row kind="cols" label="Columns"><field-pill class="shelf">Name<svg slot="icon" width="6" height="6" viewBox="0 0 6 6" stroke="#fff" aria-hidden="true"><path d="M0 .5h2M0 3h3.500M0 5.500h6"/></svg></field-pill></shelf-row>
<shelf-row kind="rows" label="Rows"><field-pill class="shelf green">AGG(Apparatus %..</field-pill></shelf-row>
<div class="view"><bar-chart></bar-chart><div class="side"><filter-card></filter-card><legend-card></legend-card></div></div></div></div>
<sheet-tabs></sheet-tabs><status-bar></status-bar><task-bar></task-bar>
<calc-dialog role="dialog" aria-label="Calculated field"></calc-dialog>`);
</script>
</body>
</html>
